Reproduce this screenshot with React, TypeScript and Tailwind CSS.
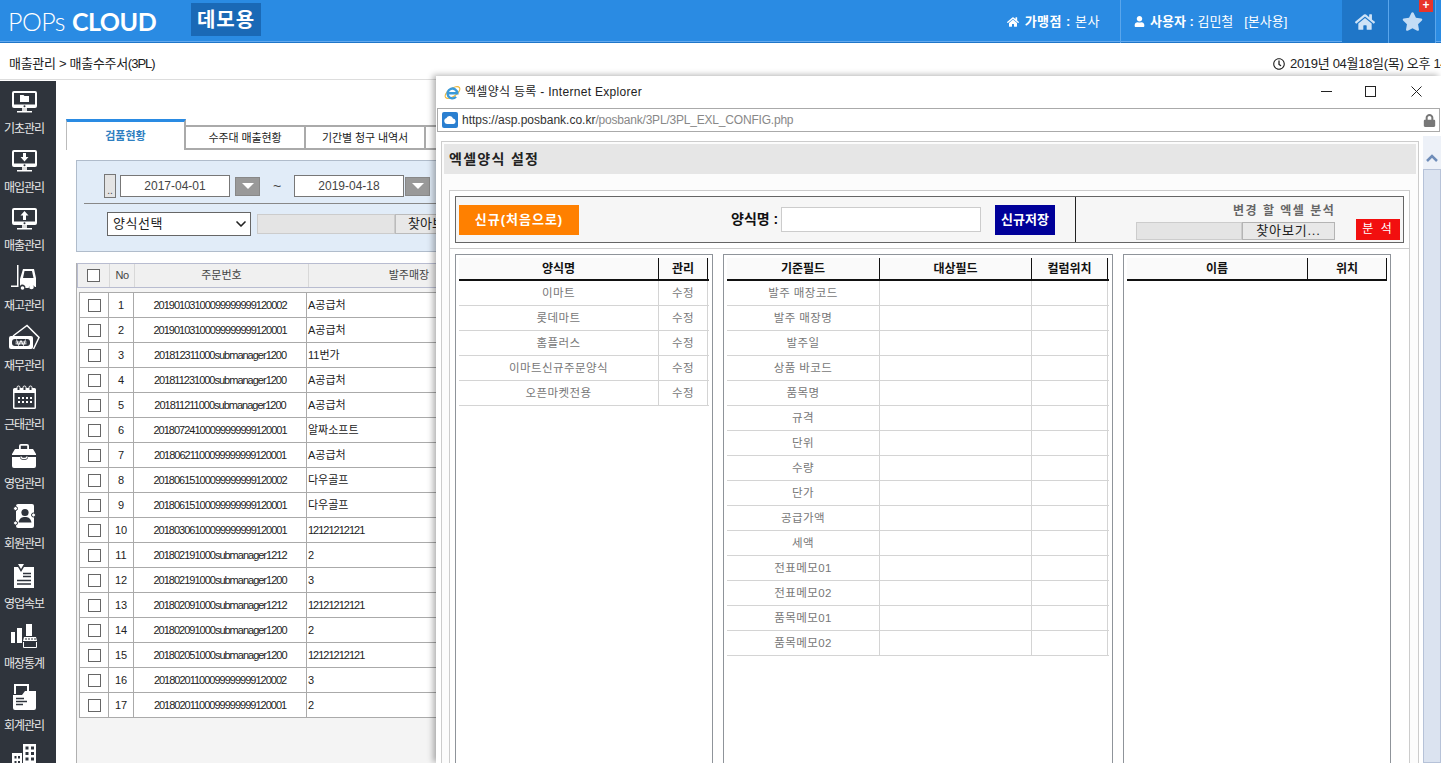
import { ReactNode } from "react"
import { FaHome, FaUser, FaStar, FaRegClock, FaLock } from "react-icons/fa"
import { ChevronDown } from "lucide-react"

const font = "font-['Liberation_Sans','Noto_Sans_CJK_KR',sans-serif]"

const Monitor = ({ arrow }: { arrow: "folder" | "down" | "up" }) => (
  <svg width="25" height="22" viewBox="0 0 25 22">
    <rect x="0" y="0" width="25" height="17" rx="2" fill="#fff" />
    <rect x="2" y="2" width="21" height="11.500" fill="#2f343c" />
    <circle cx="12.500" cy="15.200" r="1" fill="#2f343c" />
    <rect x="10" y="17" width="5" height="3" fill="#ddd" />
    <rect x="5" y="20" width="15" height="1.500" fill="#fff" />
    {arrow === "folder" && <path d="M8 4h3.500l1 1H17v6H8z" fill="#fff" />}
    {arrow === "down" && <path d="M11 3h3v4h2.500l-4 4.500-4-4.500H11z" fill="#fff" />}
    {arrow === "up" && <path d="M12.500 3l4 4.500H14V12h-3V7.500H8.500z" fill="#fff" />}
  </svg>
)

const Forklift = () => (
  <svg width="26" height="25" viewBox="0 0 26 25">
    <path d="M6 0h1.500v22H0v-1.500h6z" fill="#fff" />
    <path d="M12 4h11l2 9v9h-1a3.500 3.500 0 0 0-6.500 1h-3a3 3 0 0 0-5.500-2V14zM13.500 6l-1.500 7h10.500l-1.500-7z" fill="#fff" fillRule="evenodd" />
    <circle cx="20.500" cy="22" r="2.300" fill="#fff" />
    <circle cx="11.500" cy="23" r="1.800" fill="#fff" />
  </svg>
)

const Bill = () => (
  <svg width="31" height="26" viewBox="0 0 31 26">
    <path d="M4 12L18 1.500 30 13.500 24.500 25" fill="none" stroke="#fff" strokeWidth="1.500" />
    <rect x="0" y="12" width="24" height="13" rx="2" fill="#fff" />
    <rect x="3" y="15" width="18" height="7" rx="3" fill="#2f343c" />
    <path d="M7.500 15.500l2 6 2.500-5 2.500 5 2-6M6.500 18h11M6.500 19.800h11" fill="none" stroke="#fff" strokeWidth="0.900" />
  </svg>
)

const Calendar = () => (
  <svg width="23" height="24" viewBox="0 0 23 24">
    <path d="M1.500 3h20A1.500 1.500 0 0 1 23 4.500v18a1.500 1.500 0 0 1-1.500 1.500h-20A1.500 1.500 0 0 1 0 22.500v-18A1.500 1.500 0 0 1 1.500 3z" fill="#fff" />
    <rect x="1.500" y="8" width="20" height="14.500" fill="#2f343c" />
    <path d="M4 5V2.500a1.500 1.500 0 0 1 3 0V5M10 5V2.500a1.500 1.500 0 0 1 3 0V5M16 5V2.500a1.500 1.500 0 0 1 3 0V5" fill="#2f343c" stroke="#fff" />
    <path d="M5 12h2v2H5zM9 12h2v2H9zM13 12h2v2h-2zM17 12h2v2h-2zM5 16h2v2H5zM9 16h2v2H9zM13 16h2v2h-2zM17 16h2v2h-2z" fill="#fff" />
  </svg>
)

const Briefcase = () => (
  <svg width="24" height="24" viewBox="0 0 24 24">
    <path d="M7 5V2a2 2 0 0 1 2-2h6a2 2 0 0 1 2 2v3h-1.800V1.800H8.800V5z" fill="#fff" />
    <path d="M3 5h18l3 5v1H0v-1z" fill="#fff" />
    <path d="M0 13h8a4 3 0 0 0 8 0h8v9a2 2 0 0 1-2 2H2a2 2 0 0 1-2-2z" fill="#fff" />
    <path d="M9 12.500a3 2 0 0 0 6 0" fill="none" stroke="#fff" strokeWidth="1.300" />
  </svg>
)

const Member = () => (
  <svg width="23" height="24" viewBox="0 0 23 24">
    <rect x="3" y="0" width="18" height="24" rx="2" fill="#fff" />
    <circle cx="2.500" cy="4.500" r="2" fill="#fff" stroke="#2f343c" />
    <circle cx="2.500" cy="19" r="2" fill="#fff" stroke="#2f343c" />
    <circle cx="20.500" cy="11" r="2" fill="#fff" stroke="#2f343c" />
    <circle cx="12" cy="8.500" r="3.600" fill="#2f343c" />
    <path d="M5.500 18.500c1-4.500 3.500-5.500 6.500-5.500s5.500 1 6.500 5.500z" fill="#2f343c" />
  </svg>
)

const Clipboard = () => (
  <svg width="20" height="24" viewBox="0 0 20 24">
    <path d="M0 3h4l3 5 3-5h10v21H0z" fill="#fff" />
    <path d="M4 0h6L7 5z" fill="#fff" />
    <path d="M9 9.500h8M9 12.500h8M3 16.500h14M3 20h14" stroke="#2f343c" strokeWidth="1.600" />
  </svg>
)

const Stats = () => (
  <svg width="26" height="24" viewBox="0 0 26 24">
    <rect x="0" y="8" width="4" height="11" fill="#fff" />
    <rect x="6" y="4" width="5" height="15" fill="#fff" />
    <rect x="15" y="0" width="6" height="12" fill="#fff" />
    <path d="M13 13h12l1 4H12z" fill="#fff" />
    <path d="M15 14v2M18 14v2M21 14v2M24 14v2" stroke="#2f343c" />
    <path d="M12.500 18v5.500h13V18" fill="none" stroke="#fff" />
  </svg>
)

const WordDoc = () => (
  <svg width="23" height="26" viewBox="0 0 23 26">
    <path d="M1 0h15v8h-2V2H3v8H1z" fill="#fff" />
    <path d="M0 11h9l3-4h11v17a2 2 0 0 1-2 2H2a2 2 0 0 1-2-2z" fill="#fff" />
    <path d="M3 14.500h8M3 17.500h11M3 20.500h7" stroke="#2f343c" strokeWidth="1.400" />
  </svg>
)

const Building = () => (
  <svg width="24" height="26" viewBox="0 0 24 26">
    <path d="M0 9h10v17H0z" fill="#fff" />
    <path d="M11 0h13v26H11z" fill="#fff" />
    <path d="M2.500 12h2v2.500h-2zM6 12h2v2.500H6zM2.500 17h2v2.500h-2zM6 17h2v2.500H6zM13.500 2.500h3v3h-3zM19 2.500h3v3h-3zM13.500 8h3v3h-3zM19 8h3v3h-3zM13.500 13.500h3v3h-3zM19 13.500h3v3h-3z" fill="#2f343c" />
  </svg>
)

const menus = [
  { label: "기초관리", h: "h-[59px]", icon: <Monitor arrow="folder" /> },
  { label: "매입관리", h: "h-[58px]", icon: <Monitor arrow="down" /> },
  { label: "매출관리", h: "h-[60px]", icon: <Monitor arrow="up" /> },
  { label: "재고관리", h: "h-[60px]", icon: <Forklift /> },
  { label: "재무관리", h: "h-[59px]", icon: <Bill /> },
  { label: "근태관리", h: "h-[59px]", icon: <Calendar /> },
  { label: "영업관리", h: "h-[60px]", icon: <Briefcase /> },
  { label: "회원관리", h: "h-[60px]", icon: <Member /> },
  { label: "영업속보", h: "h-[60px]", icon: <Clipboard /> },
  { label: "매장통계", h: "h-[62px]", icon: <Stats /> },
  { label: "회계관리", h: "h-[60px]", icon: <WordDoc /> },
  { label: "", h: "h-[60px]", icon: <Building /> },
]

const orders = [
  ["20190103100099999999120002", "A공급처"],
  ["20190103100099999999120001", "A공급처"],
  ["201812311000submanager1200", "11번가"],
  ["201811231000submanager1200", "A공급처"],
  ["201811211000submanager1200", "A공급처"],
  ["20180724100099999999120001", "알짜소프트"],
  ["20180621100099999999120001", "A공급처"],
  ["20180615100099999999120002", "다우골프"],
  ["20180615100099999999120001", "다우골프"],
  ["20180306100099999999120001", "12121212121"],
  ["201802191000submanager1212", "2"],
  ["201802191000submanager1200", "3"],
  ["201802091000submanager1212", "12121212121"],
  ["201802091000submanager1200", "2"],
  ["201802051000submanager1200", "12121212121"],
  ["20180201100099999999120002", "3"],
  ["20180201100099999999120001", "2"],
]

const forms = ["이마트", "롯데마트", "홈플러스", "이마트신규주문양식", "오픈마켓전용"]
const fields = ["발주 매장코드", "발주 매장명", "발주일", "상품 바코드", "품목명", "규격", "단위", "수량", "단가", "공급가액", "세액", "전표메모01", "전표메모02", "품목메모01", "품목메모02"]

function DropBtn() {
  return (
    <div className="w-[25px] h-[19px] bg-[#999999] border border-[#888] flex items-center justify-center">
      <div className="w-0 h-0 border-l-[6px] border-r-[6px] border-t-[6px] border-l-transparent border-r-transparent border-t-white" />
    </div>
  )
}

function Box({ className = "" }: { className?: string }) {
  return <div className={`w-[13px] h-[13px] border border-[#666] bg-white ${className}`} />
}

function Sidebar() {
  return (
    <aside className="w-[56px] shrink-0 bg-[#2f343c] flex flex-col pt-[8px] pr-[8px] overflow-hidden">
      {menus.map((m, i) => (
        <div key={i} className={`${m.h} shrink-0 w-full flex flex-col items-center`}>
          <div className="h-[24px] flex items-end justify-center">{m.icon}</div>
          <div className="mt-[8px] text-[12px] leading-[16px] text-[#e8e8e8] tracking-[-1px] whitespace-nowrap">{m.label}</div>
        </div>
      ))}
    </aside>
  )
}

function Backdrop() {
  return (
    <main className="flex-1 min-w-0 bg-white pt-[38px] pl-[10px] overflow-hidden">
      <div className="flex items-end h-[31px] text-[11px]">
        <div className="w-[120px] h-[31px] border-t-[3px] border-t-[#2a8be3] border-l border-l-[#bbb] border-r-2 border-r-[#aaa] flex items-center justify-center font-bold text-[#2f7fc1]">검품현황</div>
        {["수주대 매출현황", "기간별 청구 내역서", ""].map((t) => (
          <div key={t} className="w-[120px] h-[25px] border-2 border-l-0 border-[#aaa] flex items-center justify-center text-[#222] pt-[1px] tracking-[-0.1px]">{t}</div>
        ))}
      </div>
      <div className="ml-[10px] mt-[10px] w-[800px] h-[92px] bg-[#e1ecf8] border border-[#b0bccb] pt-[12px]">
        <div className="flex items-center h-[26px] pl-[27px] text-[12px] text-[#444]">
          <div className="w-[12px] h-[24px] border border-[#777] bg-[#e4e4e4] text-[10px] leading-[32px] text-center">..</div>
          <div className="ml-[4px] w-[110px] h-[22px] border border-[#777] bg-white flex items-center justify-center">2017-04-01</div>
          <div className="ml-[5px]"><DropBtn /></div>
          <div className="w-[34px] text-center text-[14px]">~</div>
          <div className="w-[110px] h-[22px] border border-[#777] bg-white flex items-center justify-center">2019-04-18</div>
          <div className="ml-[1px]"><DropBtn /></div>
        </div>
        <div className="ml-[7px] mt-[4px] border-t border-[#888] pt-[8px] pl-[23px] flex items-center">
          <div className="w-[144px] h-[24px] border border-[#666] bg-white flex items-center justify-between pl-[5px] pr-[1px] text-[13px] text-[#222] tracking-[0.5px]">
            양식선택
            <ChevronDown size={16} strokeWidth={2.500} className="text-[#222]" />
          </div>
          <div className="ml-[6px] w-[138px] h-[20px] bg-[#e4e4e4] border border-[#ccc]" />
          <div className="w-[90px] h-[20px] bg-[#e8e8e8] border border-[#bbb] text-[13px] leading-[18px] px-[12px] text-[#222]">찾아보기...</div>
        </div>
      </div>
      <div className="ml-[10px] mt-[11px] w-[800px] h-[600px] bg-[#f4f4f4] border-l border-[#b0b0b0]">
        <div className="flex h-[25px] bg-[#f0f0f0] border border-[#b8bcd0] text-[11px] text-[#444] text-center leading-[23px]">
          <div className="w-[32px] border-r border-[#d8d8d8] flex items-center pl-[9px]"><Box /></div>
          <div className="w-[25px] border-r border-[#d8d8d8] tracking-[-0.5px] font-medium">No</div>
          <div className="w-[174px] border-r border-[#d8d8d8]">주문번호</div>
          <div className="w-[200px]">발주매장</div>
        </div>
        <table className="mt-[4px] ml-[2px] table-fixed border-collapse text-[11px] text-[#222] bg-white w-[790px]">
          <colgroup>
            <col className="w-[29px]" />
            <col className="w-[25px]" />
            <col className="w-[173px]" />
            <col />
          </colgroup>
          <tbody>
            {orders.map((o, i) => (
              <tr key={i} className="h-[25px]">
                <td className="border border-[#aaa]"><Box className="ml-[8px]" /></td>
                <td className="border border-[#aaa] text-center">{i + 1}</td>
                <td className="border border-[#aaa] text-center tracking-[-1px]">{o[0]}</td>
                <td className={/^\d+$/.test(o[1]) ? "border border-[#aaa] pl-[1px] tracking-[-1px]" : "border border-[#aaa] pl-[1px]"}>{o[1]}</td>
              </tr>
            ))}
          </tbody>
        </table>
      </div>
    </main>
  )
}

function Panel({ w, heads, children }: { w: string; heads: string[][]; children?: ReactNode }) {
  return (
    <div className={`${w} h-[520px] border border-[#8f949a] px-[3px] pt-[3px] bg-white`}>
      <div className="flex h-[23px] bg-[#fafafa] border-b-2 border-[#111]">
        {heads.map(([t, c]) => (
          <div key={t} className={`${c} shrink-0 border-r border-[#111] text-center text-[12px] font-bold leading-[22px] text-[#111]`}>{t}</div>
        ))}
      </div>
      {children}
    </div>
  )
}

function Row({ cells }: { cells: string[][] }) {
  return (
    <div className="flex h-[25px] border-b border-[#d4d4d4]">
      {cells.map(([t, c], i) => (
        <div key={i} className={`${c} shrink-0 border-r border-[#d4d4d4] text-center text-[11.500px] leading-[24px] text-[#777] tracking-[0.4px]`}>{t}</div>
      ))}
    </div>
  )
}

function Popup() {
  return (
    <div className="absolute left-[436px] top-[76px] right-0 bottom-0 bg-white shadow-[-3px_-1px_6px_rgba(0,0,0,0.3)] flex flex-col overflow-hidden">
      <div className="h-[32px] shrink-0 flex items-center pl-[8px] text-[12px] text-[#222]">
        <svg width="17" height="17" viewBox="0 0 17 17">
          <ellipse cx="8.500" cy="8.500" rx="8.500" ry="4" transform="rotate(-35 8.500 8.500)" fill="none" stroke="#f0b93a" strokeWidth="1.100" />
          <path d="M3.800 9.200h9.500a4.900 4.900 0 1 0-1.300 3.600" fill="none" stroke="#3b9ad9" strokeWidth="2.400" />
        </svg>
        <span className="ml-[4px] tracking-[0.3px]">엑셀양식 등록 - Internet Explorer</span>
        <div className="ml-auto flex items-center pr-[19px] -mt-[1px]">
          <div className="w-[11px] h-[1px] bg-[#222]" />
          <div className="ml-[33px] w-[11px] h-[11px] border border-[#222]" />
          <svg className="ml-[35px]" width="11" height="11" viewBox="0 0 11 11"><path d="M.5.5l10 10M10.500.5l-10 10" stroke="#222" /></svg>
        </div>
      </div>
      <div className="h-[24px] shrink-0 mx-[1px] border border-[#aaa] flex items-center pl-[4px] pr-[3px] text-[12px]">
        <div className="w-[16px] h-[16px] bg-[#2a7fd0] rounded-[2px] flex items-center justify-center">
          <svg width="12" height="8" viewBox="0 0 12 8"><path d="M3 8a3 3 0 0 1-.500-5.900A3.500 3.500 0 0 1 9 2.500 2.800 2.800 0 0 1 9.500 8z" fill="#fff" /></svg>
        </div>
        <span className="ml-[4px] text-[#333]">https://asp.posbank.co.kr</span>
        <span className="text-[#888] tracking-[-0.2px]">/posbank/3PL/3PL_EXL_CONFIG.php</span>
        <FaLock size={13} className="ml-auto text-[#777]" />
      </div>
      <div className="flex-1 min-h-0 flex pt-[9px] pl-[5px]">
        <div className="w-[978px] shrink-0 h-[700px] border border-[#ccc] p-[2px] bg-[#fcfcfc]">
          <div className="h-[30px] bg-[#e6e6e6] pl-[5px] flex items-center text-[14px] font-bold text-[#222] tracking-[1.300px]">엑셀양식 설정</div>
          <div className="mt-[16px] ml-[5px] w-[961px] h-[600px] border border-[#ccc] bg-white p-[5px] pb-0">
            <div className="h-[47px] border border-[#666] bg-[#f6f6f6] flex items-center">
              <div className="w-[619px] flex items-center pl-[3px]">
                <div className="w-[120px] h-[30px] bg-[#ff8000] flex items-center justify-center text-[13px] font-bold text-white tracking-[1px]">신규(처음으로)</div>
                <div className="ml-[152px] w-[50px] whitespace-nowrap text-[14px] font-bold text-[#111]">양식명 :</div>
                <div className="w-[200px] h-[25px] bg-white border border-[#ccc]" />
                <div className="ml-[14px] w-[60px] h-[30px] bg-[#000099] flex items-center justify-center text-[13px] font-bold text-white">신규저장</div>
              </div>
              <div className="h-full flex-1 border-l border-[#222] text-[12px]">
                <div className="pl-[157px] pt-[5px] h-[24px] font-bold text-[#666] tracking-[1.500px] whitespace-nowrap">변경 할 엑셀 분석</div>
                <div className="flex items-center">
                  <div className="ml-[60px] w-[106px] h-[18px] bg-[#e4e4e4] border border-[#ccc]" />
                  <div className="w-[93px] h-[18px] bg-[#e8e8e8] border border-[#b4b4b4] text-center text-[13px] leading-[16px] text-[#222] tracking-[0.8px]">찾아보기...</div>
                  <div className="ml-[21px] -mt-[2px] w-[44px] h-[21px] bg-[#f20f0f] text-white text-center leading-[21px] tracking-[2px]">분 석</div>
                </div>
              </div>
            </div>
            <div className="mt-[5px] -mx-[5px] border-t border-[#ccc]" />
            <div className="mt-[5px] flex items-start gap-[10px]">
              <Panel w="w-[258px]" heads={[["양식명", "w-[200px]"], ["관리", "w-[49px]"]]}>
                {forms.map((f) => (
                  <Row key={f} cells={[[f, "w-[200px]"], ["수정", "w-[49px]"]]} />
                ))}
              </Panel>
              <Panel w="w-[390px]" heads={[["기준필드", "w-[153px]"], ["대상필드", "w-[152px]"], ["컬럼위치", "w-[76px]"]]}>
                {fields.map((f) => (
                  <Row key={f} cells={[[f, "w-[153px]"], ["", "w-[152px]"], ["", "w-[76px]"]]} />
                ))}
              </Panel>
              <Panel w="w-[268px]" heads={[["이름", "w-[181px]"], ["위치", "w-[79px]"]]} />
            </div>
          </div>
        </div>
        <div className="ml-auto w-[18px] -mt-[5px] bg-[#edf1f8] flex flex-col">
          <div className="h-[33px] shrink-0 flex items-end justify-center pb-[7px]">
            <svg width="12" height="8" viewBox="0 0 12 8"><path d="M1 7l5-5 5 5" fill="none" stroke="#6f8db9" strokeWidth="2.500" /></svg>
          </div>
          <div className="flex-1 bg-[#dbe3f0] border border-[#b6c2d8]" />
        </div>
      </div>
    </div>
  )
}

export default function App() {
  return (
    <div className={`relative w-[1441px] h-[763px] overflow-hidden flex flex-col bg-white ${font}`}>
      <header className="h-[43px] shrink-0 bg-[#2a8be3] shadow-[inset_0_-1px_0_#1f76c8,inset_0_-2px_0_#63a9ee] flex text-white">
        <div className="pl-[8px] w-[191px] flex items-center text-[25px] leading-none font-['Lato',sans-serif] pb-[1px] tracking-[-0.5px]">
          <span className="font-light">POPs</span>
          <span className="font-bold ml-[7px]">CLOUD</span>
        </div>
        <div className="mt-[3px] h-[33px] w-[70px] bg-[#1a69b6] flex items-center justify-center text-[20px] font-bold tracking-[1px]">데모용</div>
        <div className="ml-auto flex h-full text-[13px]">
          <div className="flex items-center gap-[6px] pr-[20px] border-r border-[#5aa6ec]">
            <FaHome size={12} />
            <span className="tracking-[0.5px]"><b>가맹점 :</b> 본사</span>
          </div>
          <div className="flex items-center gap-[5px] w-[221px] pl-[13px]">
            <FaUser size={11} />
            <span className="whitespace-nowrap"><b>사용자 :</b> 김민철 &nbsp; [본사용]</span>
          </div>
          <div className="w-[47px] bg-[#1f76c8] border-r border-[#5aa6ec] flex items-center justify-center">
            <FaHome size={20} className="text-[#cfe3f7]" />
          </div>
          <div className="relative w-[47px] bg-[#1f76c8] border-r border-[#5aa6ec] flex items-center justify-center mr-[5px]">
            <FaStar size={21} className="text-[#c3dcf5]" />
            <div className="absolute right-[2px] top-0 w-[14px] h-[12px] bg-[#e8342a] text-[12px] leading-[11px] text-center font-bold">+</div>
          </div>
        </div>
      </header>
      <div className="h-[37px] shrink-0 flex items-center justify-between pl-[9px] pt-[5px] text-[13px] text-[#222] border-b border-[#ddd] tracking-[-0.3px]">
        <span>매출관리 &gt; 매출수주서<span className="tracking-[-1px]">(3PL)</span></span>
        <span className="w-[168px] shrink-0 flex items-center gap-[5px] whitespace-nowrap">
          <FaRegClock size={12} className="shrink-0" />
          2019년 04월18일(목) 오후 14:00
        </span>
      </div>
      <div className="flex-1 min-h-0 flex pt-[1px]">
        <Sidebar />
        <Backdrop />
      </div>
      <Popup />
    </div>
  )
}
